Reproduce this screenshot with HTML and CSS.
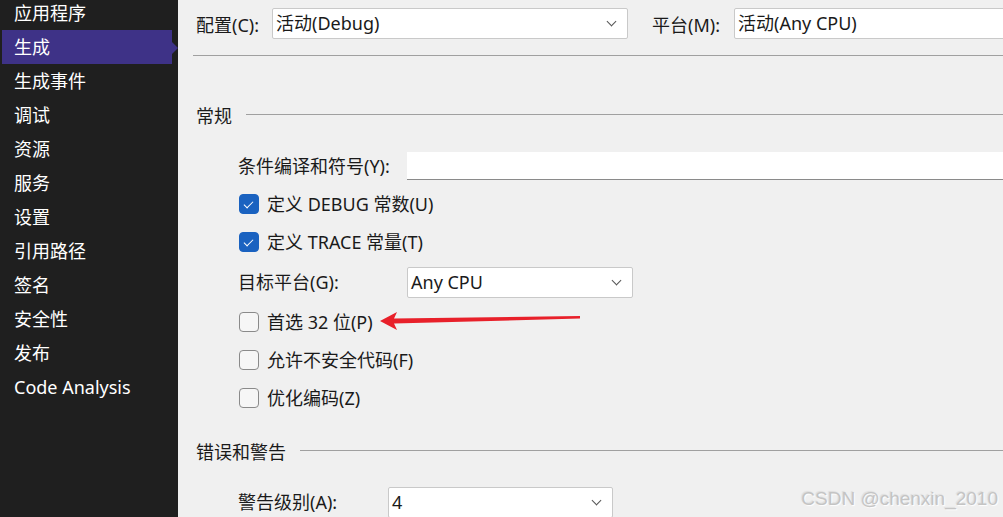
FILE: index.html
```html
<!DOCTYPE html>
<html lang="zh-CN">
<head>
	<meta charset="UTF-8">
	<title>项目属性 - 生成</title>
	<link rel="stylesheet" href="styles.css">
</head>
<body>
	<div class="page">
		<ul class="nav">
			<li>应用程序</li>
			<li class="active">生成</li>
			<li>生成事件</li>
			<li>调试</li>
			<li>资源</li>
			<li>服务</li>
			<li>设置</li>
			<li>引用路径</li>
			<li>签名</li>
			<li>安全性</li>
			<li>发布</li>
			<li>Code Analysis</li>
		</ul>
		<div class="main">
			<div class="toolbar">
				<span class="lbl lbl-config">配置(C):</span>
				<div class="select sel-config">活动(Debug)<i class="chev"></i></div>
				<span class="lbl lbl-platform">平台(M):</span>
				<div class="select sel-platform">活动(Any CPU)</div>
			</div>
			<div class="divider"></div>

			<div class="group-head"><span>常规</span><b></b></div>
			<div class="group">
				<div class="row">
					<span class="lbl w170">条件编译和符号(Y):</span>
					<div class="textbox"></div>
				</div>
				<div class="row">
					<span class="check on"></span>定义 DEBUG 常数(U)
				</div>
				<div class="row">
					<span class="check on"></span>定义 TRACE 常量(T)
				</div>
				<div class="row tall">
					<span class="lbl w170">目标平台(G):</span>
					<div class="select sel-target">Any CPU<i class="chev"></i></div>
				</div>
				<div class="row">
					<span class="check"></span>首选 32 位(P)
				</div>
				<div class="row">
					<span class="check"></span>允许不安全代码(F)
				</div>
				<div class="row">
					<span class="check"></span>优化编码(Z)
				</div>
			</div>

			<div class="group-head head-errors"><span>错误和警告</span><b></b></div>
			<div class="group">
				<div class="row">
					<span class="lbl w150">警告级别(A):</span>
					<div class="select sel-warn">4<i class="chev"></i></div>
				</div>
			</div>

			<svg class="arrow" width="210" height="24" viewBox="0 0 210 24">
				<polygon points="0,13 17,4 14,10.5 200,8 200,10.5 14,15.5 17,22" fill="#e8202a"/>
			</svg>
			<div class="mark">CSDN @chenxin_2010</div>
		</div>
	</div>
</body>
</html>
```

FILE: styles.css
```css
*{margin: 0;padding: 0;box-sizing: border-box;}
ul{list-style: none;}
body{font-family: "Noto Sans", "Noto Sans CJK SC", sans-serif;font-size: 18px;color: #1a1a1a;background: #f0f0f0;}
.page{display: flex;width: 1003px;height: 517px;overflow: hidden;}

/* 左侧导航 */
.nav{width: 178px;background: #1f1f1f;padding: 0 6px 0 2px;margin-top: -4px;}
.nav li{height: 34px;line-height: 34px;padding-left: 12px;color: #fff;font-size: 18px;position: relative;}
.nav li.active{background: #3e3287;}
.nav li.active:after{content: '';position: absolute;right: -6px;top: 12px;border-left: 6px solid #3e3287;border-top: 6px solid transparent;border-bottom: 6px solid transparent;}

/* 右侧 */
.main{flex: 1;position: relative;overflow: hidden;}
.toolbar{display: flex;align-items: center;padding: 8px 0 0 18px;height: 39px;}
.lbl{display: block;flex: none;}
.lbl-config{width: 76px;}
.lbl-platform{width: 82px;margin-left: 24px;}
.select{position: relative;height: 31px;line-height: 28px;background: #fff;border: 1px solid #c9c9c9;border-radius: 2px;padding-left: 3px;flex: none;}
.sel-config{width: 356px;}
.sel-platform{width: 320px;}
.sel-target{width: 226px;}
.sel-warn{width: 225px;}
.chev{position: absolute;right: 12px;top: 9px;width: 7px;height: 7px;border-right: 1px solid #555;border-bottom: 1px solid #555;transform: rotate(45deg);}
.divider{height: 1px;background: #a0a0a0;margin: 16px 0 0 15px;}

.group-head{display: flex;align-items: center;height: 24px;margin: 47px 0 0 18px;}
.group-head span{font-size: 18px;}
.group-head b{flex: 1;height: 1px;background: #a0a0a0;margin: -2px 0 0 14px;}
.head-errors{margin-top: 22px;}
.group{padding: 20px 0 0 60px;}
.row{display: flex;align-items: center;height: 38px;line-height: 24px;white-space: nowrap;}
.row.tall{height: 42px;}
.w170{width: 169px;}
.w150{width: 150px;}
.textbox{width: 700px;height: 28px;background: #fff;border-bottom: 1px solid #8a8a8a;}
.check{width: 20px;height: 20px;border: 1px solid #8a8a8a;border-radius: 4px;background: #f6f6f6;margin: 0 8px 0 1px;position: relative;flex: none;}
.check.on{background: #1a62c0;border-color: #1a62c0;}
.check.on:after{content: '';position: absolute;left: 6px;top: 4px;width: 4px;height: 8px;border-right: 1.5px solid #fff;border-bottom: 1.5px solid #fff;transform: rotate(45deg);}

.arrow{position: absolute;left: 202px;top: 308px;}
.mark{position: absolute;right: 5px;bottom: 7px;font-family: "Liberation Sans", sans-serif;font-size: 19px;color: #c4c4c4;text-shadow: 1px 1px 1px #fff, -1px -1px 1px #ddd;}
```
